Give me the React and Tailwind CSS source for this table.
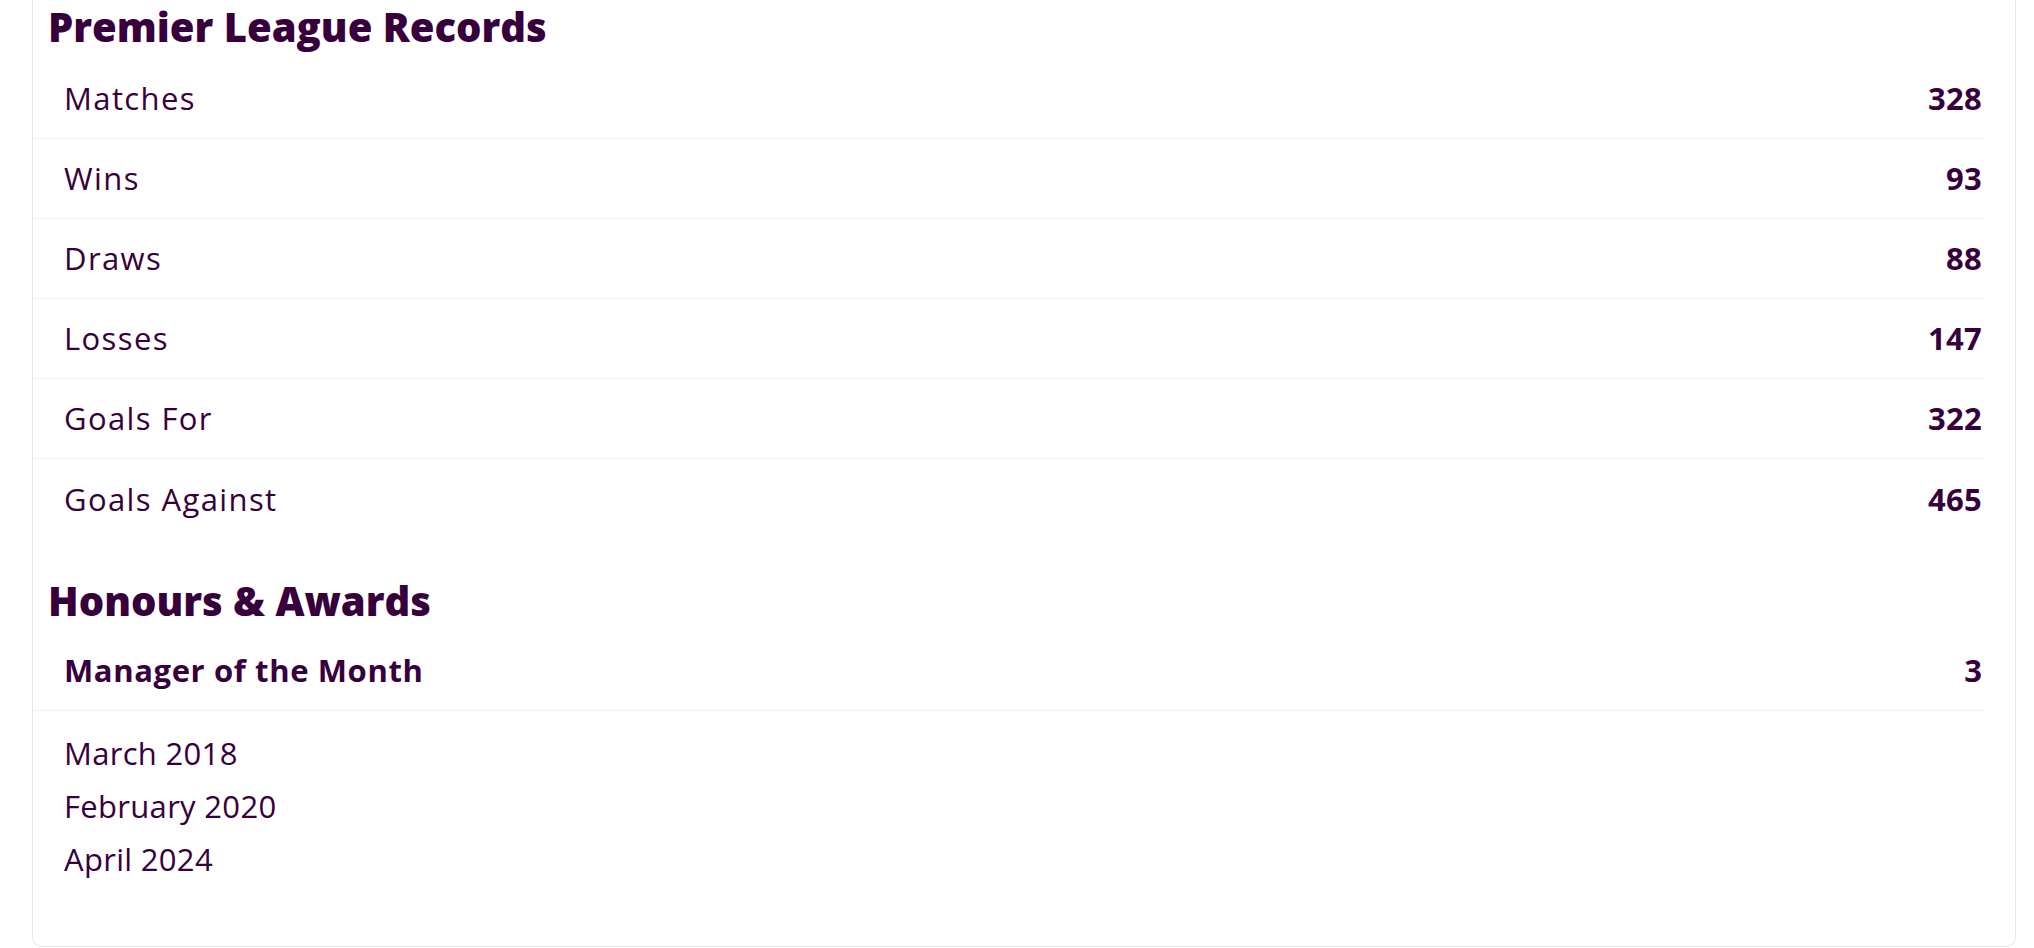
import React from 'react';

const records = [
  { label: 'Matches', value: 328 },
  { label: 'Wins', value: 93 },
  { label: 'Draws', value: 88 },
  { label: 'Losses', value: 147 },
  { label: 'Goals For', value: 322 },
  { label: 'Goals Against', value: 465 },
];

const months = ['March 2018', 'February 2020', 'April 2024'];

const App = () => {
  return (
    <div
      className="min-h-screen bg-white pl-[32px] pr-[18px] text-[#37003c]"
      style={{ fontFamily: '"Open Sans", "Liberation Sans", sans-serif' }}
    >
      <div className="border-x border-b border-[#e6e6e6] rounded-b-[10px] pb-[60px]">
        <h2 className="ml-[15px] h-[54px] text-[40px] leading-[54px] font-extrabold mb-[5px]">
          Premier League Records
        </h2>
        <ul className="mr-[31px]">
          {records.map((r, idx) => (
            <li
              key={r.label}
              className={`flex justify-between items-center h-[80px] pl-[31px] pr-[2px] ${
                idx < records.length - 1 ? 'border-b border-[#f0f0f0]' : ''
              }`}
            >
              <span className="text-[31px] tracking-[0.045em]">{r.label}</span>
              <span className="text-[31px] font-bold tracking-[0.01em]">{r.value}</span>
            </li>
          ))}
        </ul>

        <h2 className="ml-[15px] mt-[35px] h-[54px] text-[40px] leading-[54px] font-extrabold mb-[3px]">
          Honours &amp; Awards
        </h2>
        <div className="mr-[31px]">
          <div className="flex justify-between items-center h-[80px] pl-[31px] pr-[2px] border-b border-[#f0f0f0]">
            <span className="text-[31px] font-bold tracking-[0.02em]">Manager of the Month</span>
            <span className="text-[31px] font-bold">3</span>
          </div>
          <ul className="pt-[16px] pl-[31px]">
            {months.map((m) => (
              <li key={m} className="text-[31px] leading-[53px] tracking-[0.01em]">
                {m}
              </li>
            ))}
          </ul>
        </div>
      </div>
    </div>
  );
};

export default App;
